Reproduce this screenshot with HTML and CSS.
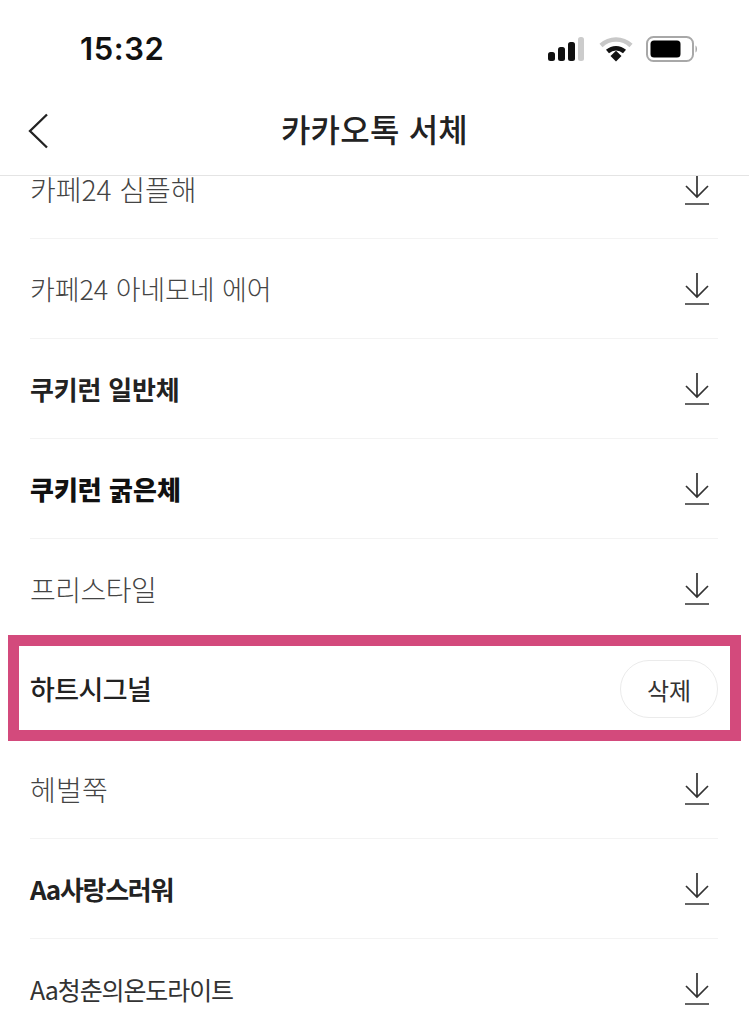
FILE: index.html
```html
<!DOCTYPE html>
<html lang="ko">
<head>
<meta charset="utf-8">
<title>카카오톡 서체</title>
<link rel="stylesheet" href="styles.css">
</head>
<body>
<div class="phone">
  <div class="status">
    <span class="time">15:32</span>
    <div class="status-icons">
      <svg class="signal" width="36" height="24" viewBox="0 0 36 24"><rect x="0" y="15" width="7" height="9" rx="2.5" fill="#111"/><rect x="10" y="10" width="7" height="14" rx="2.5" fill="#111"/><rect x="20" y="5" width="7" height="19" rx="2.5" fill="#111"/><rect x="30" y="0" width="6" height="24" rx="2.5" fill="#ccc"/></svg>
      <svg class="wifi" width="34" height="26" viewBox="0 0 34 26"><path d="M2 9.500C10.500 1.500 23.500 1.500 32 9.500" fill="none" stroke="#c8c8c8" stroke-width="4.500"/><path d="M8.500 15.500C13.500 11 20.500 11 25.500 15.500" fill="none" stroke="#111" stroke-width="4.500"/><path d="M11.500 20L17 14.800L22.500 20L17 25.500Z" fill="#111"/></svg>
      <svg class="battery" width="52" height="26" viewBox="0 0 52 26"><rect x="1" y="1" width="46" height="24" rx="6.500" fill="none" stroke="#a8a8a8" stroke-width="2"/><rect x="4.500" y="4.500" width="30" height="17" rx="3.500" fill="#000"/><path d="M49.500 9.500C51.500 10.500 51.500 15.500 49.500 16.500Z" fill="#a8a8a8"/></svg>
    </div>
  </div>
  <header class="nav">
    <svg class="back" width="22" height="36" viewBox="0 0 22 36"><path d="M20 1.500L3 18L20 34.500" fill="none" stroke="#222" stroke-width="2.300"/></svg>
    <h1 class="title">카카오톡 서체</h1>
  </header>
  <div class="viewport">
    <ul class="list">
      <li class="row"><span class="name light simple">카페24 심플해</span><svg class="dl" viewBox="0 0 26 32" width="26" height="32"><path d="M13 0V24M2 13L13 24L24 13M1 31H25" fill="none" stroke="#333" stroke-width="1.700"/></svg></li>
      <li class="row"><span class="name light thin">카페24 아네모네 에어</span><svg class="dl" viewBox="0 0 26 32" width="26" height="32"><path d="M13 0V24M2 13L13 24L24 13M1 31H25" fill="none" stroke="#333" stroke-width="1.700"/></svg></li>
      <li class="row"><span class="name bold">쿠키런 일반체</span><svg class="dl" viewBox="0 0 26 32" width="26" height="32"><path d="M13 0V24M2 13L13 24L24 13M1 31H25" fill="none" stroke="#333" stroke-width="1.700"/></svg></li>
      <li class="row"><span class="name black">쿠키런 굵은체</span><svg class="dl" viewBox="0 0 26 32" width="26" height="32"><path d="M13 0V24M2 13L13 24L24 13M1 31H25" fill="none" stroke="#333" stroke-width="1.700"/></svg></li>
      <li class="row"><span class="name light">프리스타일</span><svg class="dl" viewBox="0 0 26 32" width="26" height="32"><path d="M13 0V24M2 13L13 24L24 13M1 31H25" fill="none" stroke="#333" stroke-width="1.700"/></svg></li>
      <li class="row selected"><span class="name medium">하트시그널</span><span class="delete">삭제</span><span class="frame"></span></li>
      <li class="row"><span class="name light heobeol">헤벌쭉</span><svg class="dl" viewBox="0 0 26 32" width="26" height="32"><path d="M13 0V24M2 13L13 24L24 13M1 31H25" fill="none" stroke="#333" stroke-width="1.700"/></svg></li>
      <li class="row"><span class="name lovely">Aa사랑스러워</span><svg class="dl" viewBox="0 0 26 32" width="26" height="32"><path d="M13 0V24M2 13L13 24L24 13M1 31H25" fill="none" stroke="#333" stroke-width="1.700"/></svg></li>
      <li class="row"><span class="name youth">Aa청춘의온도라이트</span><svg class="dl" viewBox="0 0 26 32" width="26" height="32"><path d="M13 0V24M2 13L13 24L24 13M1 31H25" fill="none" stroke="#333" stroke-width="1.700"/></svg></li>
    </ul>
  </div>
</div>
</body>
</html>
```
FILE: styles.css
```css
* { box-sizing: border-box; }
html, body { margin: 0; padding: 0; background: #fff; }
.phone {
  width: 749px;
  height: 1024px;
  overflow: hidden;
  display: flex;
  flex-direction: column;
  font-family: "Noto Sans CJK KR", "Noto Sans", sans-serif;
  color: #1c1c1c;
}
.status {
  height: 90px;
  padding: 30px 51px 0 80px;
  display: flex;
  justify-content: space-between;
  align-items: flex-start;
}
.time {
  font-family: Inter, "Liberation Sans", sans-serif;
  font-weight: 600;
  font-size: 31px;
  line-height: 38px;
  letter-spacing: 0.6px;
  color: #111;
}
.status-icons {
  display: flex;
  align-items: center;
  gap: 13px;
  padding-top: 6px;
}
.signal { margin-right: 2px; }
.nav {
  height: 86px;
  flex: none;
  position: relative;
  display: flex;
  align-items: center;
  justify-content: center;
  border-bottom: 1px solid #e4e4e4;
  padding-bottom: 10px;
}
.back { position: absolute; left: 27px; top: 23px; }
.title {
  margin: 0;
  font-size: 32px;
  font-weight: 500;
  line-height: 44px;
  letter-spacing: 0.2px;
  color: #222;
}
.viewport { flex: 1; overflow: hidden; }
.list {
  list-style: none;
  margin: -37px 0 0;
  padding: 0 31px 0 30px;
}
.row {
  height: 100px;
  display: flex;
  align-items: center;
  justify-content: space-between;
  border-bottom: 1px solid #f3f3f3;
  position: relative;
  padding-right: 8px;
}
.name {
  font-size: 28px;
  line-height: 40px;
  letter-spacing: -0.5px;
  color: #333;
}
.light { font-weight: 300; color: #444; }
.simple { letter-spacing: 0; }
.thin { font-size: 27px; letter-spacing: -0.1px; }
.heobeol { letter-spacing: 0.2px; }
.medium { font-weight: 500; color: #222; font-size: 27px; letter-spacing: -0.6px; }
.bold { font-weight: 700; color: #222; font-size: 26px; letter-spacing: -0.2px; }
.black { font-weight: 900; color: #111; font-size: 26px; letter-spacing: 0; }
.lovely { font-weight: 700; color: #222; font-size: 26px; letter-spacing: -1.3px; }
.youth { font-weight: 400; color: #333; font-size: 25px; letter-spacing: -1.1px; }
.dl { flex: none; display: block; }
.selected { border-bottom: none; padding-right: 0; }
.delete {
  width: 98px;
  height: 58px;
  border: 1px solid #ebebeb;
  border-radius: 29px;
  display: flex;
  align-items: center;
  justify-content: center;
  font-size: 24px;
  color: #333;
}
.frame {
  position: absolute;
  left: -22px;
  right: -23px;
  top: -4px;
  height: 106px;
  border: 11px solid #d34a7c;
  pointer-events: none;
}
```
